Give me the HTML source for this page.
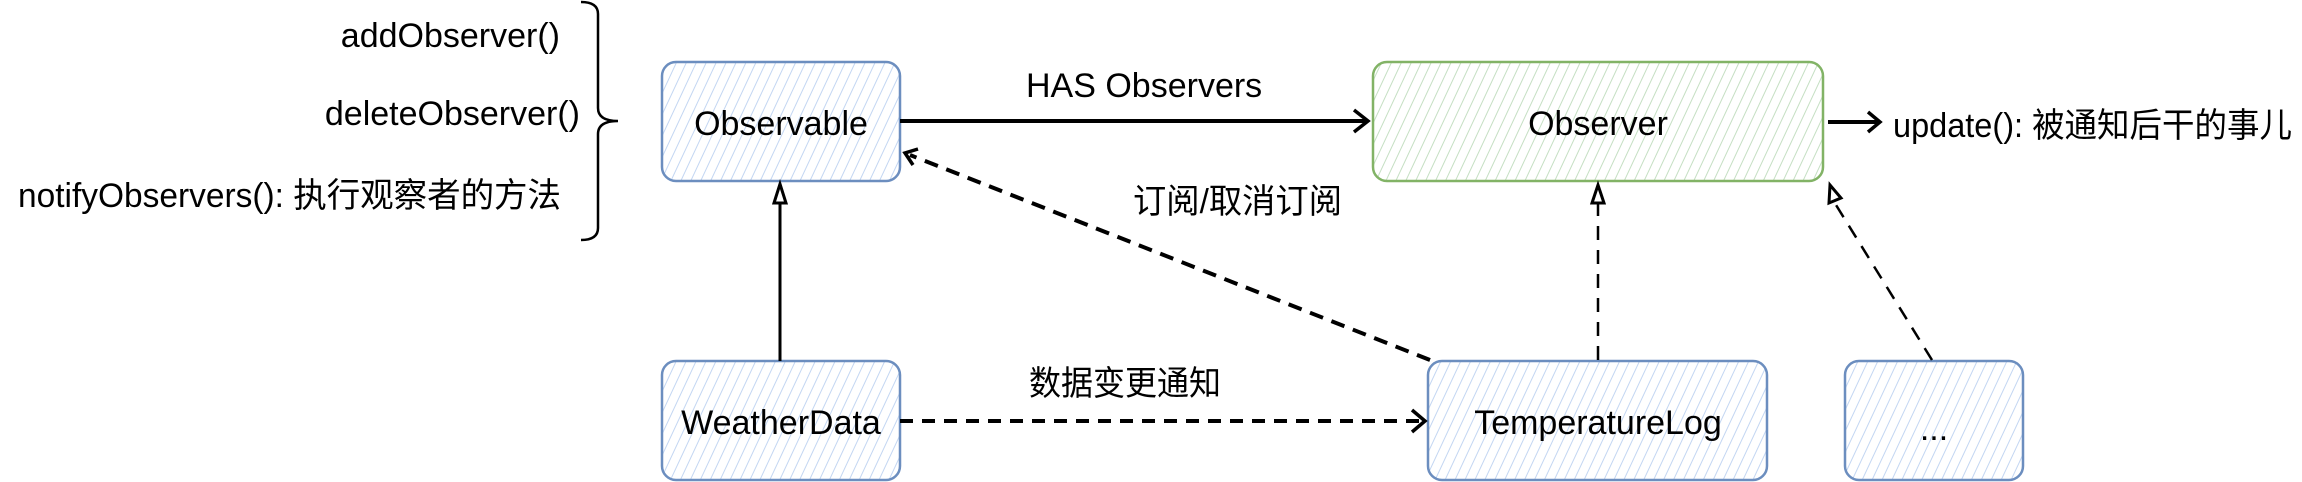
<!DOCTYPE html>
<html><head><meta charset="utf-8"><style>
html,body{margin:0;padding:0;background:#fff;}
svg{display:block}
text{font-family:"Liberation Sans","Noto Sans CJK SC",sans-serif;font-size:34px;fill:#000;}
</style></head><body>
<svg width="2302" height="482" viewBox="0 0 2302 482" xmlns="http://www.w3.org/2000/svg">
<defs>
<pattern id="hb" width="9" height="9" patternUnits="userSpaceOnUse" patternTransform="rotate(25)">
<rect width="9" height="9" fill="#fff"/><line x1="0" y1="0" x2="0" y2="9" stroke="#c3d6f2" stroke-width="2"/></pattern>
<pattern id="hg" width="9" height="9" patternUnits="userSpaceOnUse" patternTransform="rotate(25)">
<rect width="9" height="9" fill="#fff"/><line x1="0" y1="0" x2="0" y2="9" stroke="#c5dfc3" stroke-width="2"/></pattern>
</defs>
<rect x="662" y="62" width="238" height="119" rx="14" fill="url(#hb)" stroke="#6c8ebf" stroke-width="2.5"/>
<rect x="662" y="361" width="238" height="119" rx="14" fill="url(#hb)" stroke="#6c8ebf" stroke-width="2.5"/>
<rect x="1373" y="62" width="450" height="119" rx="14" fill="url(#hg)" stroke="#82b366" stroke-width="2.5"/>
<rect x="1428" y="361" width="339" height="119" rx="14" fill="url(#hb)" stroke="#6c8ebf" stroke-width="2.5"/>
<rect x="1845" y="361" width="178" height="119" rx="14" fill="url(#hb)" stroke="#6c8ebf" stroke-width="2.5"/>
<path d="M581 2 Q598 2 598 14 L598 108 Q598 121 618 121 Q598 121 598 134 L598 228 Q598 240 581 240" fill="none" stroke="#000" stroke-width="2.5"/>
<line x1="900" y1="121" x2="1366" y2="121" stroke="#000" stroke-width="4"/>
<path d="M1354 110 L1368 121 L1354 132" fill="none" stroke="#000" stroke-width="3.5"/>
<line x1="1828" y1="122" x2="1878" y2="122" stroke="#000" stroke-width="4"/>
<path d="M1868 112 L1880 122 L1868 132" fill="none" stroke="#000" stroke-width="3.5"/>
<line x1="780" y1="361" x2="780" y2="203" stroke="#000" stroke-width="3"/>
<path d="M774 203 L780 184 L786 203 Z" fill="#fff" stroke="#000" stroke-width="3"/>
<line x1="1430" y1="360" x2="910" y2="155" stroke="#000" stroke-width="4" stroke-dasharray="14,9"/>
<path d="M918 149 L905 153 L913 165" fill="none" stroke="#000" stroke-width="3.5"/>
<line x1="1598" y1="360" x2="1598" y2="204" stroke="#000" stroke-width="2.5" stroke-dasharray="14,10"/>
<path d="M1592 203 L1598 185 L1604 203 Z" fill="#fff" stroke="#000" stroke-width="3"/>
<line x1="1932" y1="360" x2="1836" y2="205" stroke="#000" stroke-width="2.5" stroke-dasharray="14,10"/>
<path d="M1829 203 L1830 185 L1841 198 Z" fill="#fff" stroke="#000" stroke-width="3"/>
<line x1="900" y1="421" x2="1420" y2="421" stroke="#000" stroke-width="4" stroke-dasharray="13,9"/>
<path d="M1412 410 L1425 421 L1412 432" fill="none" stroke="#000" stroke-width="3.5"/>
<text x="560" y="47" text-anchor="end">addObserver()</text>
<text x="580" y="125" text-anchor="end">deleteObserver()</text>
<text x="18" y="207" textLength="543" lengthAdjust="spacingAndGlyphs">notifyObservers(): 执行观察者的方法</text>
<text x="781" y="135" text-anchor="middle">Observable</text>
<text x="781" y="434" text-anchor="middle">WeatherData</text>
<text x="1598" y="135" text-anchor="middle">Observer</text>
<text x="1598" y="434" text-anchor="middle">TemperatureLog</text>
<text x="1934" y="440" text-anchor="middle">...</text>
<text x="1026" y="97">HAS Observers</text>
<text x="1893" y="137" textLength="399" lengthAdjust="spacingAndGlyphs">update(): 被通知后干的事儿</text>
<text x="1133" y="213" textLength="209" lengthAdjust="spacingAndGlyphs">订阅/取消订阅</text>
<text x="1029" y="395" textLength="192" lengthAdjust="spacingAndGlyphs">数据变更通知</text>
</svg>
</body></html>
